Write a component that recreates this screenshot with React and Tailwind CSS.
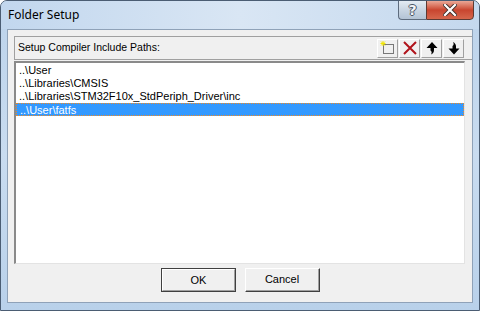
import React from "react";

const rows = [
  "..\\User",
  "..\\Libraries\\CMSIS",
  "..\\Libraries\\STM32F10x_StdPeriph_Driver\\inc",
  "..\\User\\fatfs",
];

function ToolBtn({ children }) {
  return (
    <div className="w-[21px] h-[19px] flex items-center justify-center bg-[#f0f0f0] border-t border-l border-white border-b border-r border-b-[#a0a0a0] border-r-[#a0a0a0]">
      {children}
    </div>
  );
}

export default function App() {
  return (
    <div
      className="w-[480px] h-[311px] overflow-hidden flex flex-col rounded-t-[7px] border border-[#4b5d73] bg-gradient-to-b from-[#bcd3eb] via-[#c9dcf0] to-[#b9d1ea]"
      style={{ fontFamily: '"Liberation Sans", Arial, sans-serif' }}
    >
      {/* title bar */}
      <div className="h-[28px] flex items-start justify-between pl-[7px] pr-[5px] bg-gradient-to-r from-[#c2d7ee] via-[#d9e6f4] to-[#c4d8ee]">
        <div
          className="pt-[5px] text-[12px] text-black"
          style={{ fontFamily: '"Noto Sans", "Open Sans", sans-serif' }}
        >
          Folder Setup
        </div>
        <div className="flex -mt-px">
          <div className="w-[28px] h-[20px] flex items-center justify-center rounded-bl-[4px] border border-[#5d6b7d] border-r-0 bg-gradient-to-b from-[#e4ebf3] via-[#c9d5e2] to-[#b3c3d5]">
            <span
              className="text-[14px] font-bold text-[#f2f4f7] leading-none"
              style={{
                fontFamily: '"DejaVu Sans", sans-serif',
                textShadow:
                  "1px 0 0 #4a5564, -1px 0 0 #4a5564, 0 1px 0 #4a5564, 0 -1px 0 #4a5564",
              }}
            >
              ?
            </span>
          </div>
          <div className="w-[48px] h-[20px] flex items-center justify-center rounded-br-[4px] border border-[#5d3a33] bg-gradient-to-b from-[#e9a796] via-[#c9452f] to-[#d6664c]">
            <svg width="14" height="12" viewBox="0 0 14 12">
              <path d="M2 1 L12 11 M12 1 L2 11" stroke="#40302c" strokeWidth="4" strokeLinecap="square" />
              <path d="M2 1 L12 11 M12 1 L2 11" stroke="#ffffff" strokeWidth="2.2" strokeLinecap="square" />
            </svg>
          </div>
        </div>
      </div>

      {/* client */}
      <div className="flex-1 mx-[6px] mb-[7px] border border-[#8fa2b8] bg-[#f0f0f0] flex flex-col overflow-hidden">
        <div className="pl-[6px] pt-[6px] flex flex-col">
          {/* header */}
          <div className="h-[24px] flex items-center justify-between border-t border-l border-b border-[#a0a0a0] bg-[#f0f0f0] pl-[3px] pr-[8px]">
            <span className="text-[10.5px] text-black">Setup Compiler Include Paths:</span>
            <div className="flex gap-px -ml-px">
              <ToolBtn>
                <svg width="18" height="16" viewBox="0 0 18 16">
                  <rect x="4.5" y="4.5" width="10" height="9" fill="none" stroke="#000" strokeWidth="1" strokeDasharray="1 1" />
                  <path d="M4 1 V6 M1.5 3.5 H6.5 M2 1.5 L6 5.5 M6 1.5 L2 5.5" stroke="#f2e600" strokeWidth="1" />
                </svg>
              </ToolBtn>
              <ToolBtn>
                <svg width="18" height="16" viewBox="0 0 18 16">
                  <path d="M3 2 L15 14 M15 2 L3 14" stroke="#b0131a" strokeWidth="2" />
                </svg>
              </ToolBtn>
              <ToolBtn>
                <svg width="18" height="16" viewBox="0 0 18 16">
                  <path d="M9 2 L14.5 8 L11 8 L11 10 Q11 13 8 14.5 Q9.5 12 7.5 10.5 L7.5 8 L3.5 8 Z" fill="#000" />
                </svg>
              </ToolBtn>
              <ToolBtn>
                <svg width="18" height="16" viewBox="0 0 18 16">
                  <path d="M9 14.5 L14.5 8.5 L11 8.5 L11 6.5 Q11 3.5 8 2 Q9.5 4.5 7.5 6 L7.5 8.5 L3.5 8.5 Z" fill="#000" />
                </svg>
              </ToolBtn>
            </div>
          </div>
          {/* list */}
          <div className="mr-[7px] mt-px h-[203px] border-t-2 border-l-2 border-t-[#8a8a8a] border-l-[#8a8a8a] border-r border-b border-r-[#e3e3e3] border-b-[#e3e3e3] bg-white pt-px">
            {rows.map((r, i) => (
              <div
                key={i}
                className={
                  "h-[13px] leading-[13px] text-[11px] pl-[3px] whitespace-nowrap " +
                  (i === 3
                    ? "bg-[#3399ff] text-white border border-dotted border-[#f08a24] pl-[2px] leading-[11px]"
                    : "text-black")
                }
              >
                {r}
              </div>
            ))}
          </div>
        </div>
        {/* buttons */}
        <div className="flex justify-center gap-[9px] mt-[4px] pl-[1px]">
          <div className="w-[75px] h-[24px] flex items-center justify-center border border-[#404040] bg-[#f0f0f0]">
            <div className="w-full h-full flex items-center justify-center border-t border-l border-white border-b border-r border-b-[#a0a0a0] border-r-[#a0a0a0] text-[11px] text-black">
              OK
            </div>
          </div>
          <div className="w-[75px] h-[24px] flex items-center justify-center border-t border-l border-white border-b border-r border-b-[#404040] border-r-[#404040] bg-[#f0f0f0]">
            <div className="w-full h-full flex items-center justify-center border-b border-r border-b-[#a0a0a0] border-r-[#a0a0a0] text-[11px] text-black">
              Cancel
            </div>
          </div>
        </div>
      </div>
    </div>
  );
}
